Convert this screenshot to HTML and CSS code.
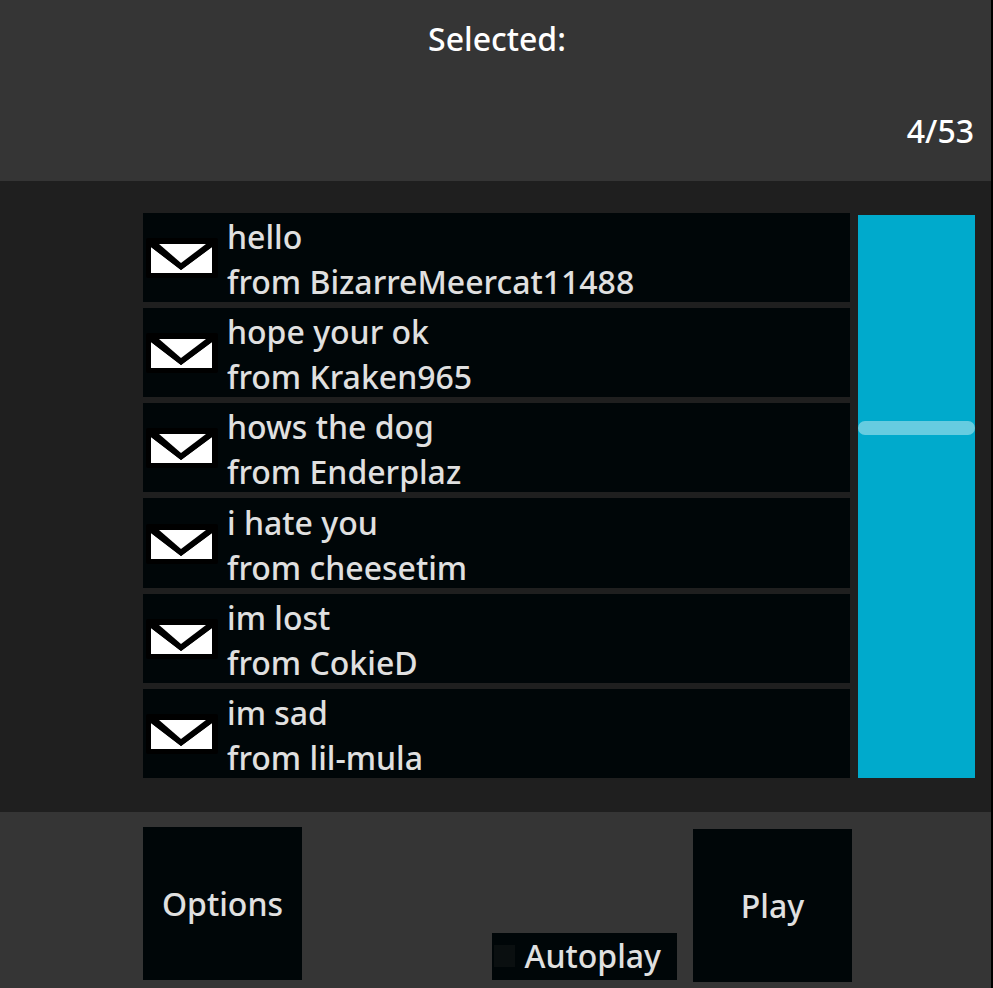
FILE: index.html
```html
<!DOCTYPE html>
<html lang="en">
<head>
  <meta charset="UTF-8" />
  <meta name="viewport" content="width=device-width, initial-scale=1.0"/>
  <title>Messages</title>
  <link rel="stylesheet" href="styles.css">
</head>
<body>
  <!-- envelope icon, reused by every row -->
  <svg class="sprite" aria-hidden="true">
    <symbol id="envelope" viewBox="0 0 72 40">
      <rect width="72" height="40" rx="2" fill="#000"/>
      <path d="M5 9L35 32L66 9V35H5Z" fill="#fff"/>
      <path d="M5 6H66V9L35 32L5 9Z" fill="#000"/>
      <path d="M13 6H60L35 25Z" fill="#fff"/>
    </symbol>
  </svg>

  <header class="top">
    <p class="selected">Selected:</p>
    <p class="count">4/53</p>
  </header>

  <main class="browser">
    <ul class="messages">
      <li>
        <button class="message" type="button">
          <svg class="icon" aria-hidden="true"><use href="#envelope"/></svg>
          <span>hello<br>from BizarreMeercat11488</span>
        </button>
      </li>
      <li>
        <button class="message" type="button">
          <svg class="icon" aria-hidden="true"><use href="#envelope"/></svg>
          <span>hope your ok<br>from Kraken965</span>
        </button>
      </li>
      <li>
        <button class="message" type="button">
          <svg class="icon" aria-hidden="true"><use href="#envelope"/></svg>
          <span>hows the dog<br>from Enderplaz</span>
        </button>
      </li>
      <li>
        <button class="message" type="button">
          <svg class="icon" aria-hidden="true"><use href="#envelope"/></svg>
          <span>i hate you<br>from cheesetim</span>
        </button>
      </li>
      <li>
        <button class="message" type="button">
          <svg class="icon" aria-hidden="true"><use href="#envelope"/></svg>
          <span>im lost<br>from CokieD</span>
        </button>
      </li>
      <li>
        <button class="message" type="button">
          <svg class="icon" aria-hidden="true"><use href="#envelope"/></svg>
          <span>im sad<br>from lil-mula</span>
        </button>
      </li>
    </ul>
    <input class="scroll" type="range" min="0" max="1000" value="375" aria-label="Scroll messages">
  </main>

  <footer class="bottom">
    <button class="big-button" type="button">Options</button>
    <div class="play-group">
      <label class="autoplay"><input type="checkbox">Autoplay</label>
      <button class="big-button" type="button">Play</button>
    </div>
  </footer>
</body>
</html>
```
FILE: styles.css
```css
* {
  box-sizing: border-box;
}

body {
  margin: 0;
  min-height: 100vh;
  display: flex;
  flex-direction: column;
  background: #1f1f1f;
  border-right: 2px solid #000;
  color: #fff;
  font-family: "Noto Sans", "Open Sans", sans-serif;
  font-size: 32px;
  font-weight: 500;
  line-height: 44px;
}

button {
  border: none;
  padding: 0;
  background: #000608;
  color: #e0e0e0;
  font: inherit;
  cursor: pointer;
}

.sprite {
  display: none;
}

/* top bar */
.top {
  display: flex;
  flex-direction: column;
  gap: 48px;
  padding: 17px 17px 28px 20px;
  background: #353535;
}

.top p {
  margin: 0;
}

.selected {
  text-align: center;
}

.count {
  text-align: right;
}

/* message list and its slider */
.browser {
  flex: 1;
  display: flex;
  gap: 8px;
  padding: 32px 16px 34px 143px;
}

.messages {
  flex: 1;
  display: grid;
  grid-template-rows: repeat(6, 1fr);
  gap: 6px;
  margin: 0;
  padding: 0;
  list-style: none;
}

.message {
  display: flex;
  align-items: center;
  gap: 9px;
  width: 100%;
  height: 100%;
  padding: 1px 0 0 3px;
  line-height: 45px;
  text-align: left;
}

.message span {
  margin-bottom: -2px;
}

.icon {
  flex: none;
  width: 72px;
  height: 40px;
}

.scroll {
  appearance: none;
  -webkit-appearance: none;
  writing-mode: vertical-lr;
  width: 117px;
  height: auto;
  margin: 2px 0 0;
  background: #00aacc;
  cursor: pointer;
}

.scroll::-webkit-slider-thumb {
  -webkit-appearance: none;
  width: 117px;
  height: 14px;
  border-radius: 7px;
  background: #66cce0;
}

/* bottom bar */
.bottom {
  display: flex;
  justify-content: space-between;
  padding: 15px 139px 6px 143px;
  background: #353535;
}

.big-button {
  width: 159px;
  height: 153px;
}

.play-group {
  display: flex;
  align-items: flex-end;
  gap: 16px;
  padding-top: 2px;
}

.autoplay {
  display: flex;
  align-items: center;
  gap: 9px;
  height: 47px;
  margin-bottom: 2px;
  padding: 0 16px 2px 2px;
  background: #000608;
  color: #e0e0e0;
  cursor: pointer;
}

.autoplay input {
  appearance: none;
  -webkit-appearance: none;
  width: 21px;
  height: 22px;
  margin: 0;
  background: #0a0f10;
}

.autoplay input:checked {
  background: #00aacc;
}
```
